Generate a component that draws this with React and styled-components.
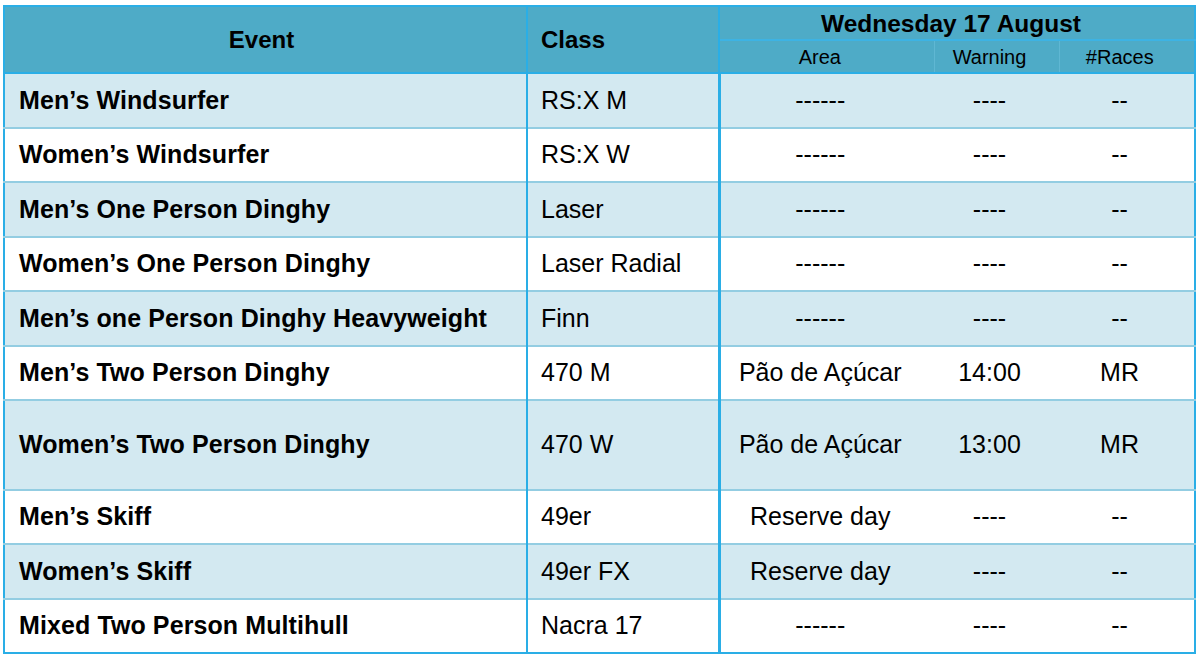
import React from 'react'
import styled, { createGlobalStyle } from 'styled-components'

const GlobalStyle = createGlobalStyle`
  body {
    margin: 0;
    background: #ffffff;
    font-family: "Liberation Sans", Arial, sans-serif;
    color: #000;
  }
`

const rows = [
  { event: 'Men’s Windsurfer', cls: 'RS:X M', area: '------', warn: '----', races: '--' },
  { event: 'Women’s Windsurfer', cls: 'RS:X W', area: '------', warn: '----', races: '--' },
  { event: 'Men’s One Person Dinghy', cls: 'Laser', area: '------', warn: '----', races: '--' },
  { event: 'Women’s One Person Dinghy', cls: 'Laser Radial', area: '------', warn: '----', races: '--' },
  { event: 'Men’s one Person Dinghy Heavyweight', cls: 'Finn', area: '------', warn: '----', races: '--' },
  { event: 'Men’s Two Person Dinghy', cls: '470 M', area: 'Pão de Açúcar', warn: '14:00', races: 'MR' },
  { event: 'Women’s Two Person Dinghy', cls: '470 W', area: 'Pão de Açúcar', warn: '13:00', races: 'MR', tall: true },
  { event: 'Men’s Skiff', cls: '49er', area: 'Reserve day', warn: '----', races: '--' },
  { event: 'Women’s Skiff', cls: '49er FX', area: 'Reserve day', warn: '----', races: '--' },
  { event: 'Mixed Two Person Multihull', cls: 'Nacra 17', area: '------', warn: '----', races: '--' },
]

const App = () => {
  return (
    <Page>
      <GlobalStyle />
      <Table>
        <colgroup>
          <col style={{ width: 523 }} />
          <col style={{ width: 192 }} />
          <col style={{ width: 215 }} />
          <col style={{ width: 125 }} />
          <col style={{ width: 136 }} />
        </colgroup>
        <thead>
          <HeadRow>
            <HeadCell rowSpan={2} $align="center">Event</HeadCell>
            <HeadCell rowSpan={2} $align="left">Class</HeadCell>
            <DayCell colSpan={3}>Wednesday 17 August</DayCell>
          </HeadRow>
          <SubRow>
            <SubCell>Area</SubCell>
            <SubCell>Warning</SubCell>
            <SubCell>#Races</SubCell>
          </SubRow>
        </thead>
        <tbody>
          {rows.map((r, i) => (
            <Row key={r.event} $shade={i % 2 === 0} $tall={r.tall}>
              <EventCell>{r.event}</EventCell>
              <ClassCell>{r.cls}</ClassCell>
              <ValueCell>{r.area}</ValueCell>
              <ValueCell>{r.warn}</ValueCell>
              <ValueCell>{r.races}</ValueCell>
            </Row>
          ))}
        </tbody>
      </Table>
    </Page>
  )
}

export default App

const Page = styled.div`
  padding: 5px 0 0 3px;
`

const Table = styled.table`
  width: 1191px;
  table-layout: fixed;
  border-collapse: collapse;
  border: 2px solid #2aaee6;
`

const HeadRow = styled.tr`
  height: 34px;
  background: #4eabc7;
`

const SubRow = styled.tr`
  height: 33px;
  background: #4eabc7;
  border-bottom: 2px solid #2aaee6;
`

const HeadCell = styled.th`
  font-size: 24px;
  font-weight: bold;
  text-align: ${p => p.$align};
  padding: 0 ${p => (p.$align === 'left' ? '0 0 13px' : '8px 0 0')};
  border-right: 2px solid #2aaee6;
  vertical-align: middle;
`

const DayCell = styled.th`
  font-size: 24.5px;
  font-weight: bold;
  text-align: center;
  padding: 2px 12px 0 0;
  border-bottom: 2px solid #3db3e4;
`

const SubCell = styled.th`
  font-size: 20px;
  font-weight: normal;
  text-align: center;
  padding: 2px 14px 0 0;
  border-right: 1px solid #5fb7d3;
  &:last-child {
    border-right: none;
  }
`

const Row = styled.tr`
  height: ${p => (p.$tall ? '89.5px' : '54.5px')};
  background: ${p => (p.$shade ? '#d3e9f1' : '#ffffff')};
  border-bottom: 2px solid #93cde2;
  &:last-child {
    border-bottom: none;
  }
`

const EventCell = styled.td`
  font-size: 25px;
  font-weight: bold;
  padding: 0 0 0 14px;
  border-right: 2px solid #2aaee6;
  white-space: nowrap;
  letter-spacing: 0.1px;
`

const ClassCell = styled.td`
  font-size: 25px;
  padding: 0 0 0 13px;
  border-right: 3px solid #2aaee6;
  white-space: nowrap;
`

const ValueCell = styled.td`
  font-size: 25px;
  text-align: center;
  padding: 0 14px 0 0;
  white-space: nowrap;
`
